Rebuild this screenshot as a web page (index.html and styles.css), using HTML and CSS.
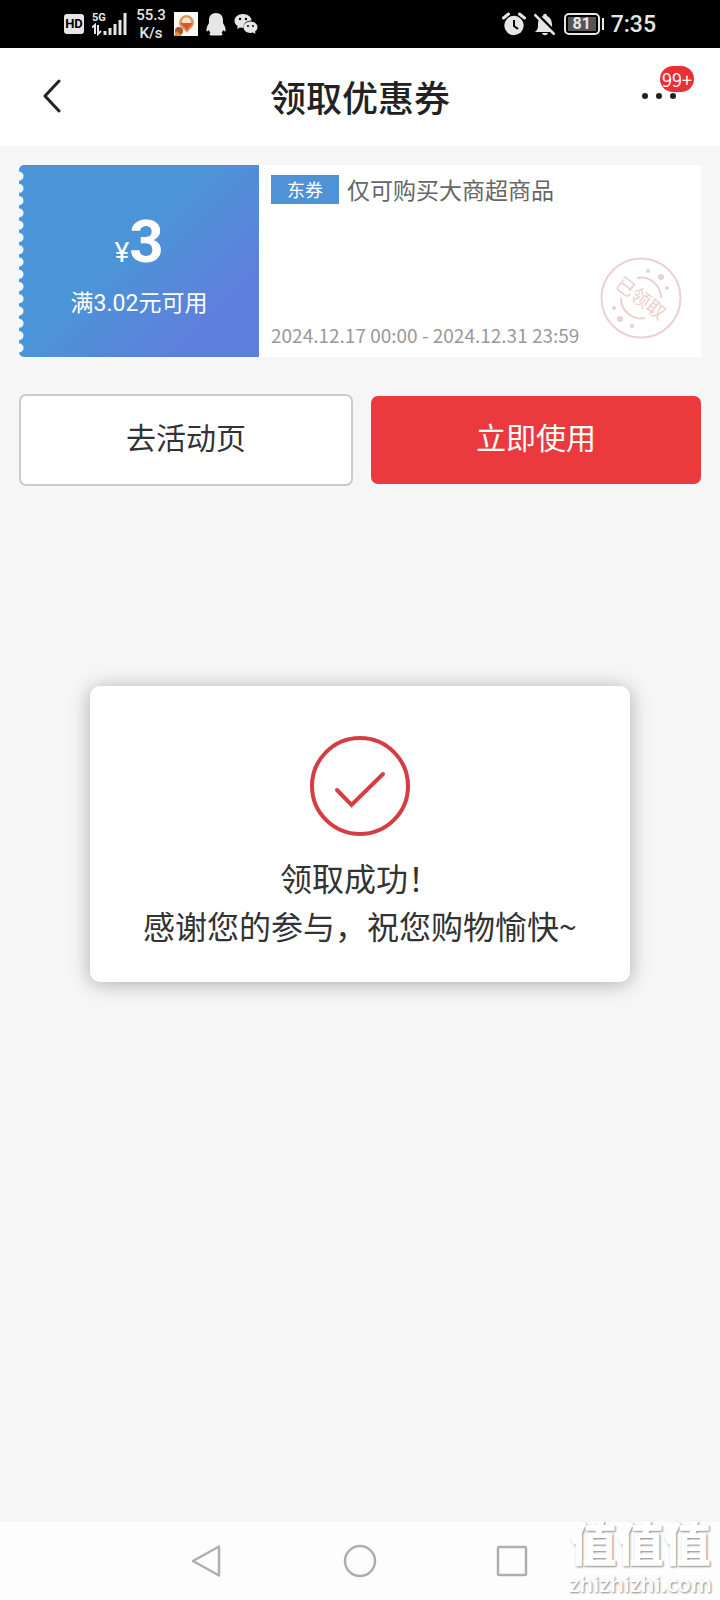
FILE: index.html
```html
<!DOCTYPE html>
<html lang="zh-CN">

<head>
    <meta charset="utf-8">
    <meta name="viewport" content="width=device-width, initial-scale=1">
    <title>领取优惠券</title>
    <link rel="stylesheet" href="styles.css">
</head>

<body>
    <div class="status">
        <div class="status-left">
            <span class="hd">HD</span>
            <svg class="signal" width="36" height="24" viewBox="0 0 36 24">
                <text x="0" y="9" class="net">5G</text>
                <path d="M0 15.500l3-2.500v9M6 13v9l3-3" fill="none" stroke="#e6e6e6" stroke-width="2"/>
                <path d="M13 19v4M18 16v7M23 12v11M28 8v15M33 1v22" stroke="#e6e6e6" stroke-width="3"/>
            </svg>
            <span class="speed">55.3<br>K/s</span>
            <svg width="24" height="24" viewBox="0 0 24 24">
                <rect width="24" height="24" fill="#fdf8f3"/>
                <path d="M12 3a8 8 0 0 1 8 8c0 4-4 5-7 10-2-4-8-6-8-10a8 8 0 0 1 7-8z" fill="#e0935f"/>
                <circle cx="12.500" cy="10" r="4.500" fill="#f7dfca"/>
                <path d="M7 11h11c-1 4-4 4-5 8-1-4-5-4-6-8z" fill="#d9572b"/>
                <circle cx="5" cy="19" r="4" fill="#a5542e"/>
                <path d="M0 24l3-5 5 5z" fill="#f08a35"/>
            </svg>
            <svg width="20" height="24" viewBox="1 0 20 24">
                <path d="M11 1c4.500 0 7 3 7 7v3c2 3 3 6 2.500 8-.5 1-1.500 0-2.500-1-.3 1.500-1 2.500-1.500 3 2 1 1 2.500-1.500 2.500H7C4.500 23.500 3.500 22 5.500 21 5 20.500 4.300 19.500 4 18c-1 1-2 2-2.500 1C1 17 2 14 4 11V8c0-4 2.500-7 7-7z" fill="#e6e6e6"/>
            </svg>
            <svg width="24" height="22" viewBox="0 0 24 22">
                <path d="M9 1c5 0 8.500 3 8.500 6.500-5 0-8.500 3-8 7.500-1 0-2.500-.2-3.500-.5L3 16l.8-2.700C2 12 .5 10 .5 8 .5 4 4 1 9 1z" fill="#e6e6e6"/>
                <path d="M16.500 8.500c4 0 7 2.500 7 5.700 0 1.800-1 3.300-2.500 4.400l.5 2.200-2.500-1.300c-5 1.500-9.500-1.500-9.500-5.300 0-3.200 3-5.700 7-5.700z" fill="#e6e6e6"/>
                <g fill="#000">
                    <circle cx="6" cy="6" r="1.200"/>
                    <circle cx="12" cy="6" r="1.200"/>
                    <circle cx="14" cy="13" r="1"/>
                    <circle cx="19" cy="13" r="1"/>
                </g>
            </svg>
        </div>
        <div class="status-right">
            <svg width="24" height="24" viewBox="0 0 24 24">
                <circle cx="12" cy="13.500" r="9.700" fill="#e6e6e6"/>
                <path d="M1.500 6l5-4M22.500 6l-5-4" stroke="#e6e6e6" stroke-width="3" stroke-linecap="round"/>
                <path d="M12 8v6l4 3" fill="none" stroke="#000" stroke-width="2"/>
            </svg>
            <svg width="22" height="24" viewBox="1 0 22 24">
                <path d="M2 20c2-2 3-3 3-7 0-5 2-8 5-9 0-3 4-3 4 0 3 1 5 4 5 9 0 4 1 5 3 7zM9 21h6c-1 3-5 3-6 0z" fill="#e6e6e6"/>
                <path d="M3 1l20 20" stroke="#000" stroke-width="3"/>
                <path d="M1.500 2.500l20 20" stroke="#e6e6e6" stroke-width="2.500"/>
            </svg>
            <span class="battery"><b>81</b></span>
            <span class="time">7:35</span>
        </div>
    </div>

    <header class="header">
        <button class="back" aria-label="返回">
            <svg width="20" height="34" viewBox="0 0 20 34">
                <path d="M17 2L3 17 17 32" fill="none" stroke="#222" stroke-width="3" stroke-linecap="round" stroke-linejoin="round"/>
            </svg>
        </button>
        <h1>领取优惠券</h1>
        <button class="more" aria-label="更多">
            <svg width="36" height="8" viewBox="0 0 36 8">
                <g fill="#222">
                    <circle cx="3" cy="4" r="3"/>
                    <circle cx="17" cy="4" r="3"/>
                    <circle cx="31" cy="4" r="3"/>
                </g>
            </svg>
            <span class="badge">99+</span>
        </button>
    </header>

    <main class="main">
        <section class="coupon">
            <div class="coupon-left">
                <p class="price"><span>¥</span><b>3</b></p>
                <p class="limit">满3.02元可用</p>
            </div>
            <div class="coupon-right">
                <p class="name"><span class="tag">东券</span>仅可购买大商超商品</p>
                <p class="date">2024.12.17 00:00 - 2024.12.31 23:59</p>
                <svg class="stamp" width="82" height="82" viewBox="0 0 82 82">
                    <g fill="none" stroke="#ecd0d2" stroke-width="2">
                        <circle cx="41" cy="41" r="39.500"/>
                        <path d="M37 21a20 20 0 0 1 24 20M21 41a20 20 0 0 0 24 20"/>
                    </g>
                    <g fill="#ecd0d2">
                        <circle cx="48" cy="14" r="2"/>
                        <circle cx="61" cy="20" r="3"/>
                        <circle cx="67" cy="31" r="2"/>
                        <circle cx="14" cy="51" r="2"/>
                        <circle cx="20" cy="62" r="3"/>
                        <circle cx="32" cy="69" r="2"/>
                    </g>
                    <text x="41" y="48" text-anchor="middle" transform="rotate(37 41 41)">已领取</text>
                </svg>
            </div>
        </section>

        <div class="btns">
            <button class="btn">去活动页</button>
            <button class="btn btn-red">立即使用</button>
        </div>

        <div class="mask">
            <div class="dialog" role="dialog">
                <svg width="100" height="100" viewBox="0 0 100 100">
                    <g fill="none" stroke="#d43d42" stroke-width="4">
                        <circle cx="50" cy="50" r="48"/>
                        <path d="M27 54l14.500 15L73 38" stroke-linecap="round"/>
                    </g>
                </svg>
                <p>领取成功！<br>感谢您的参与，祝您购物愉快~</p>
            </div>
        </div>
    </main>

    <nav class="nav">
        <button aria-label="返回">
            <svg width="34" height="34" viewBox="0 0 34 34">
                <path d="M28 2.500v29L2 17z" fill="none" stroke="#aeaeae" stroke-width="2.500" stroke-linejoin="round"/>
            </svg>
        </button>
        <button aria-label="主页">
            <svg width="34" height="34" viewBox="0 0 34 34">
                <circle cx="17" cy="17" r="15" fill="none" stroke="#aeaeae" stroke-width="2.500"/>
            </svg>
        </button>
        <button aria-label="最近任务">
            <svg width="34" height="34" viewBox="0 0 34 34">
                <rect x="3" y="3" width="28" height="28" rx="1" fill="none" stroke="#aeaeae" stroke-width="2.500"/>
            </svg>
        </button>
        <div class="logo"><b>值值值</b><span>zhizhizhi.com</span></div>
    </nav>
</body>

</html>
```
FILE: styles.css
```css
* {
    margin: 0;
    padding: 0;
    box-sizing: border-box;
}

body {
    display: flex;
    flex-direction: column;
    min-height: 100vh;
    background-color: #f6f6f6;
    color: #333;
    font-family: "Noto Sans CJK SC", sans-serif;
}

button {
    border: none;
    background: none;
    font-family: inherit;
    cursor: pointer;
}

svg {
    display: block;
}

/* 状态栏 */
.status {
    display: flex;
    justify-content: space-between;
    height: 48px;
    padding: 0 64px;
    background-color: #000;
    color: #e6e6e6;
    font-family: Roboto, sans-serif;
}

.status-left,
.status-right {
    display: flex;
    align-items: center;
    gap: 8px;
}

.hd {
    width: 20px;
    border-radius: 3px;
    background-color: #e6e6e6;
    color: #000;
    font-size: 13px;
    font-weight: bold;
    line-height: 20px;
    text-align: center;
}

.net {
    fill: #e6e6e6;
    font-size: 11px;
    font-weight: bold;
}

.speed {
    width: 30px;
    font-size: 15px;
    font-weight: 500;
    line-height: 18px;
    text-align: center;
}

.battery {
    position: relative;
    width: 36px;
    height: 22px;
    padding: 2px;
    border: 2px solid #e6e6e6;
    border-radius: 5px;
}

.battery b {
    display: block;
    background-color: #555;
    font-size: 16px;
    line-height: 14px;
    text-align: center;
}

.battery::after {
    content: "";
    position: absolute;
    top: 3px;
    right: -6px;
    width: 2px;
    height: 12px;
    background-color: #e6e6e6;
}

.time {
    padding-left: 3px;
    font-size: 23px;
    font-weight: 500;
}

/* 标题栏 */
.header {
    display: flex;
    align-items: center;
    justify-content: space-between;
    height: 98px;
    padding: 0 42px 2px;
    background-color: #fff;
}

.header h1 {
    color: #222;
    font-size: 36px;
    font-weight: 500;
}

.back,
.more {
    width: 36px;
}

.more {
    position: relative;
}

.badge {
    position: absolute;
    bottom: 8px;
    left: 18px;
    height: 26px;
    padding: 0 2px;
    border-radius: 13px;
    background-color: #ea3034;
    color: #fff;
    font-size: 18px;
    line-height: 26px;
}

.main {
    position: relative;
    flex: 1;
    padding: 19px;
}

/* 优惠券 */
.coupon {
    display: flex;
    height: 192px;
    background-color: #fff;
    border-radius: 5px 0 0 5px;
}

.coupon-left {
    position: relative;
    width: 240px;
    padding-top: 42px;
    border-radius: 5px 0 0 5px;
    background: linear-gradient(135deg, #4c94d8 45%, #5f7fdc 80%);
    color: #fff;
    text-align: center;
    font-family: Roboto, "Noto Sans CJK SC", sans-serif;
}

/* 左侧锯齿 */
.coupon-left::before {
    content: "";
    position: absolute;
    top: 5px;
    bottom: 3px;
    left: 0;
    width: 5px;
    background: radial-gradient(circle at 0 50%, #f4faff 4px, transparent 5px) 0 0 / 5px 12px no-repeat round;
}

.price {
    line-height: 70px;
}

.price span {
    font-size: 28px;
}

.price b {
    font-size: 60px;
}

.limit {
    font-size: 23px;
    line-height: 32px;
    margin-top: -4px;
}

.coupon-right {
    position: relative;
    display: flex;
    flex: 1;
    flex-direction: column;
    justify-content: space-between;
    padding: 8px 12px;
}

.name {
    display: flex;
    align-items: center;
    gap: 8px;
    color: #666;
    font-size: 23px;
    line-height: 32px;
}

.tag {
    padding: 0 16px;
    background-color: #5092d6;
    color: #fff;
    font-size: 18px;
    line-height: 29px;
}

.date {
    color: #999;
    font-size: 19px;
    line-height: 28px;
}

.stamp {
    position: absolute;
    right: 19px;
    bottom: 18px;
}

.stamp text {
    fill: #ecd0d2;
    font-size: 19px;
}

/* 按钮 */
.btns {
    display: flex;
    align-items: center;
    gap: 18px;
    margin-top: 37px;
}

.btn {
    flex: 1;
    height: 92px;
    padding-bottom: 8px;
    border: 2px solid #ccc;
    border-radius: 7px;
    background-color: #fff;
    color: #333;
    font-size: 30px;
}

.btn-red {
    height: 88px;
    border: none;
    background-color: #ea3a3e;
    color: #fff;
}

/* 领取成功弹窗 */
.mask {
    position: absolute;
    top: 0;
    right: 0;
    bottom: 0;
    left: 0;
    display: flex;
    align-items: center;
    justify-content: center;
    pointer-events: none;
}

.dialog {
    display: flex;
    flex-direction: column;
    align-items: center;
    gap: 17px;
    width: 75%;
    padding: 50px 20px 33px;
    border-radius: 10px;
    background-color: #fff;
    box-shadow: 0 2px 20px rgba(0, 0, 0, 0.3);
    font-size: 32px;
    line-height: 48px;
    text-align: center;
}

/* 底部导航 */
.nav {
    position: relative;
    display: flex;
    align-items: center;
    justify-content: center;
    gap: 118px;
    height: 78px;
    background-color: #fdfdfd;
}

.logo {
    position: absolute;
    right: 8px;
    bottom: 4px;
    display: flex;
    flex-direction: column;
    align-items: center;
    color: #fff;
    text-shadow: 1px 1px 2px #888;
}

.logo b {
    font-size: 47px;
    font-weight: 900;
    line-height: 58px;
}

.logo span {
    font-family: "Open Sans", sans-serif;
    font-size: 22px;
    font-weight: 600;
    line-height: 26px;
}
```
